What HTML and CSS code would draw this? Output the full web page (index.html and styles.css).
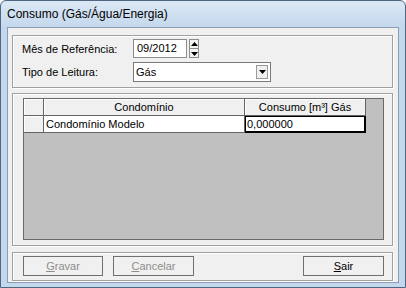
FILE: index.html
```html
<!DOCTYPE html>
<html lang="pt-BR">
<head>
  <meta charset="UTF-8" />
  <title>Consumo (Gás/Água/Energia)</title>
  <link rel="stylesheet" href="styles.css">
</head>
<body>

  <div class="window">
    <div class="titlebar">Consumo (Gás/Água/Energia)</div>

    <div class="client">
      <div class="group filtro">
        <label class="lbl">Mês de Referência:</label>
        <div class="mes">
          <div class="edit">09/2012</div>
          <div class="spin">
            <span class="spin-btn">
              <svg width="7" height="5" viewBox="0 0 7 5"><path d="M3.5 0 L7 4 L0 4 Z" fill="#000"/></svg>
            </span>
            <span class="spin-btn">
              <svg width="7" height="5" viewBox="0 0 7 5"><path d="M0 1 L7 1 L3.5 5 Z" fill="#000"/></svg>
            </span>
          </div>
        </div>

        <label class="lbl">Tipo de Leitura:</label>
        <div class="combo">
          <span class="combo-text">Gás</span>
          <span class="drop">
            <svg width="7" height="4" viewBox="0 0 7 4"><path d="M0 0 L7 0 L3.5 4 Z" fill="#000"/></svg>
          </span>
        </div>
      </div>

      <div class="group grade-box">
        <div class="grade">
          <div class="linha">
            <div class="cel fixa"></div>
            <div class="cel fixa titulo">Condomínio</div>
            <div class="cel fixa titulo">Consumo [m³] Gás</div>
          </div>
          <div class="linha">
            <div class="cel fixa"></div>
            <div class="cel dado">Condomínio Modelo</div>
            <div class="cel dado foco">0,000000</div>
          </div>
        </div>
      </div>

      <div class="group botoes">
        <button class="btn" disabled><u>G</u>ravar</button>
        <button class="btn" disabled><u>C</u>ancelar</button>
        <button class="btn sair"><u>S</u>air</button>
      </div>
    </div>
  </div>

</body>
</html>
```

FILE: styles.css
```css
body {
  margin: 0;
  font-family: "Liberation Sans", Arial, sans-serif;
  font-size: 11px;
  color: #000;
  background-color: #fff;
}

.window {
  width: 406px;
  height: 288px;
  box-sizing: border-box;
  display: flex;
  flex-direction: column;
  padding: 0 6px 4px 6px;
  border: 1px solid #4f6683;
  border-radius: 6px 6px 0 0;
  background: linear-gradient(#dce8f5, #c3d7ed 27px, #c3d7ed);
}

.titlebar {
  height: 26px;
  display: flex;
  align-items: center;
  font-size: 12px;
}

.client {
  flex: 1;
  display: flex;
  flex-direction: column;
  padding: 7px 5px 1px 4px;
  border: 1px solid #8d9db1;
  background-color: #f0f0f0;
}

/* group boxes with an etched edge */
.group {
  border: 1px solid #a0a0a0;
  box-shadow: inset 1px 1px 0 #fff, 1px 1px 0 #fff;
}

.filtro {
  display: grid;
  grid-template-columns: 111px auto;
  align-items: center;
  row-gap: 4px;
  padding: 3px 9px 5px 9px;
}

.mes {
  display: flex;
  gap: 2px;
}

.edit {
  width: 54px;
  height: 19px;
  box-sizing: border-box;
  padding: 2px 0 0 3px;
  border: 1px solid #8c8c8c;
  background-color: #fff;
}

.spin {
  width: 10px;
  height: 19px;
  display: flex;
  flex-direction: column;
}

.spin-btn {
  flex: 1;
  display: flex;
  align-items: center;
  justify-content: center;
  box-sizing: border-box;
  border: 1px solid #8c8c8c;
  background-color: #f3f3f3;
}

.spin-btn + .spin-btn {
  border-top: none;
}

.combo {
  width: 138px;
  height: 20px;
  box-sizing: border-box;
  display: flex;
  align-items: center;
  justify-content: space-between;
  padding: 0 2px 0 2px;
  border: 1px solid #7a7a7a;
  background-color: #fff;
}

.drop {
  width: 12px;
  height: 14px;
  box-sizing: border-box;
  display: flex;
  align-items: center;
  justify-content: center;
  border: 1px solid #9a9a9a;
  background-color: #f0f0f0;
}

.grade-box {
  flex: 1;
  margin-top: 5px;
  display: flex;
  padding: 4px 8px 5px 10px;
}

.grade {
  flex: 1;
  border: 1px solid #6a6a6a;
  background-color: #c0c0c0;
}

.linha {
  display: grid;
  grid-template-columns: 20px 201px 121px;
  height: 17px;
}

.cel {
  box-sizing: border-box;
  border-right: 1px solid #646464;
  border-bottom: 1px solid #646464;
  white-space: nowrap;
  overflow: hidden;
  line-height: 16px;
}

.fixa {
  background-color: #f0f0f0;
  box-shadow: inset 1px 1px 0 #fff;
}

.titulo {
  text-align: center;
}

.dado {
  background-color: #fff;
  padding-left: 2px;
}

.foco {
  border: 1px solid #000;
  border-right-width: 2px;
  border-bottom-width: 2px;
  line-height: 14px;
  padding-left: 1px;
}

.botoes {
  margin-top: 6px;
  display: flex;
  gap: 10px;
  padding: 3px 8px 4px 10px;
}

.btn {
  width: 81px;
  height: 20px;
  padding: 0;
  font-family: inherit;
  font-size: 11px;
  color: #000;
  border: 1px solid #707070;
  background-color: #f0f0f0;
}

.btn:first-child {
  width: 80px;
}

.btn:disabled {
  color: #8d8d8d;
}

.sair {
  margin-left: auto;
}
```
